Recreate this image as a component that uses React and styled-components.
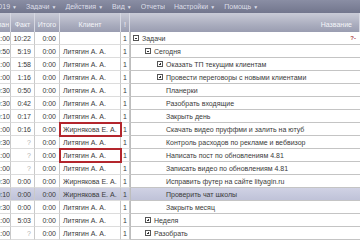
import React from "react";
import styled, { createGlobalStyle, css } from "styled-components";

const GlobalStyle = createGlobalStyle`
  html, body { margin: 0; padding: 0; background: #fff; overflow: hidden; }
  body { font-family: "Liberation Sans", Arial, sans-serif; font-size: 7px; }
`;

const Page = styled.div`
  width: 360px;
  height: 240px;
  overflow: hidden;
  display: flex;
  flex-direction: column;
`;

const MenuBar = styled.div`
  height: 13px;
  flex: none;
  display: flex;
  align-items: center;
  gap: 9px;
  background: linear-gradient(#8a8ea4, #72768d);
  color: #dcdee8;
  font-size: 7px;
  white-space: nowrap;
`;

const MenuItem = styled.div`
  display: flex;
  align-items: center;
  justify-content: flex-end;
  gap: 2px;
  overflow: hidden;
  flex: none;
  ${(p) => p.$clip && css`width: ${p.$clip}px;`}
`;

const Caret = styled.span`
  font-size: 5px;
`;

const Grid = styled.div`
  display: grid;
  grid-template-columns: 11px 24px 25px 61px 9px 1fr;
  grid-auto-rows: 13px;
  grid-template-rows: 19px;
`;

const Head = styled.div`
  background: linear-gradient(#c9cbd7, #a6a9bb 70%, #9a9db1);
  color: #f4f5f9;
  display: flex;
  align-items: flex-end;
  justify-content: ${(p) => p.$align || "center"};
  padding: 0 ${(p) => p.$padR || 0}px 4px 0;
  border-right: 1px solid #d6d8e2;
  overflow: hidden;
  white-space: nowrap;
  &:last-child { border-right: none; }
`;

const Cell = styled.div`
  display: flex;
  align-items: center;
  justify-content: ${(p) => p.$align || "flex-start"};
  padding: ${(p) => p.$pad || "0 3px"};
  border-right: 1px solid #c9c9c9;
  border-bottom: 1px solid #dcdcdc;
  background: ${(p) => (p.$sel ? "linear-gradient(#d0d2e4, #bfc2d8)" : "#fff")};
  color: ${(p) => (p.$muted ? "#b0b0b0" : "#3a3a3a")};
  white-space: nowrap;
  overflow: hidden;
  box-sizing: border-box;
  position: relative;
  ${(p) =>
    p.$mark &&
    css`
      outline: 2px solid #b3262d;
      outline-offset: -1px;
      overflow: visible;
      z-index: 1;
    `}
`;

const NameCell = styled(Cell)`
  border-right: none;
  border-left: 1px solid #bdbdbd;
  border-bottom: 1px solid #c4c4c4;
  padding-left: ${(p) => 2 + p.$level * 12}px;
  gap: 3px;
  justify-content: flex-start;
  overflow: visible;
`;

const Toggle = styled.span`
  width: 6px;
  height: 6px;
  border: 1px solid #555;
  flex: none;
  position: relative;
  box-sizing: border-box;
  &::before {
    content: "";
    position: absolute;
    left: 1px;
    right: 1px;
    top: 2px;
    height: 1px;
    background: #333;
  }
  ${(p) =>
    p.$plus &&
    css`
      &::after {
        content: "";
        position: absolute;
        top: 1px;
        bottom: 1px;
        left: 2px;
        width: 1px;
        background: #333;
      }
    `}
`;

const Leaf = styled.span`
  width: 6px;
  flex: none;
`;

const Flag = styled.span`
  position: absolute;
  right: 4px;
  top: 3px;
  color: #b0474c;
  font-weight: bold;
  font-size: 6px;
`;

const L = "Литягин А. А.";
const Z = "Жирнякова Е. А.";

const rows = [
  { plan: "1:00", fact: "10:22", client: "", name: "Задачи", level: 0, t: "minus", flag: true },
  { plan: "0:50", fact: "5:19", client: L, name: "Сегодня", level: 1, t: "minus" },
  { plan: "1:00", fact: "1:58", client: L, name: "Оказать ТП текущим клиентам", level: 2, t: "plus" },
  { plan: "1:00", fact: "1:16", client: L, name: "Провести переговоры с новыми клиентами", level: 2, t: "plus" },
  { plan: "0:30", fact: "0:50", client: L, name: "Планерки", level: 2 },
  { plan: "0:30", fact: "0:42", client: L, name: "Разобрать входящие", level: 2 },
  { plan: "0:10", fact: "0:17", client: L, name: "Закрыть день", level: 2 },
  { plan: "1:00", fact: "0:16", client: Z, name: "Скачать видео пруффми и залить на ютуб", level: 2, mark: true },
  { plan: "0:30", fact: "?", client: L, name: "Контроль расходов по рекламе и вебвизор", level: 2 },
  { plan: "1:00", fact: "?", client: L, name: "Написать пост по обновлениям 4.81", level: 2, mark: true },
  { plan: "1:00", fact: "?", client: L, name: "Записать видео по обновлениям 4.81", level: 2 },
  { plan: "0:30", fact: "0:00", client: Z, name: "Исправить футер на сайте lityagin.ru", level: 2 },
  { plan: "0:10", fact: "0:00", client: Z, name: "Проверить чат школы", level: 2, sel: true },
  { plan: "0:30", fact: "0:00", client: L, name: "Закрыть месяц", level: 2 },
  { plan: "1:00", fact: "5:03", client: L, name: "Неделя", level: 1, t: "plus" },
  { plan: "1:00", fact: "?", client: L, name: "Разобрать", level: 1, t: "plus" },
];

const menu = [
  ["Задачи", true],
  ["Действия", true],
  ["Вид", true],
  ["Отчеты", false],
  ["Настройки", true],
  ["Помощь", true],
];

export default function App() {
  return (
    <Page>
      <GlobalStyle />
      <MenuBar>
        <MenuItem $clip={17}>2019<Caret>▼</Caret></MenuItem>
        {menu.map(([label, caret]) => (
          <MenuItem key={label}>
            {label}
            {caret && <Caret>▼</Caret>}
          </MenuItem>
        ))}
      </MenuBar>
      <Grid>
        <Head $align="flex-end" $padR={1}>План</Head>
        <Head>Факт</Head>
        <Head>Итого</Head>
        <Head>Клиент</Head>
        <Head>!</Head>
        <Head $align="flex-end" $padR={7}>Название</Head>
        {rows.map((r, i) => (
          <React.Fragment key={i}>
            <Cell $sel={r.sel} $align="flex-end" $pad="0">{r.plan}</Cell>
            <Cell $sel={r.sel} $align="flex-end" $muted={r.fact === "?"}>{r.fact}</Cell>
            <Cell $sel={r.sel} $align="flex-end">0:00</Cell>
            <Cell $sel={r.sel} $mark={r.mark}>{r.client}</Cell>
            <Cell $sel={r.sel} $align="center" $pad="0">1</Cell>
            <NameCell $sel={r.sel} $level={r.level}>
              {r.t ? <Toggle $plus={r.t === "plus"} /> : <Leaf />}
              {r.name}
              {r.flag && <Flag>?-</Flag>}
            </NameCell>
          </React.Fragment>
        ))}
      </Grid>
    </Page>
  );
}
